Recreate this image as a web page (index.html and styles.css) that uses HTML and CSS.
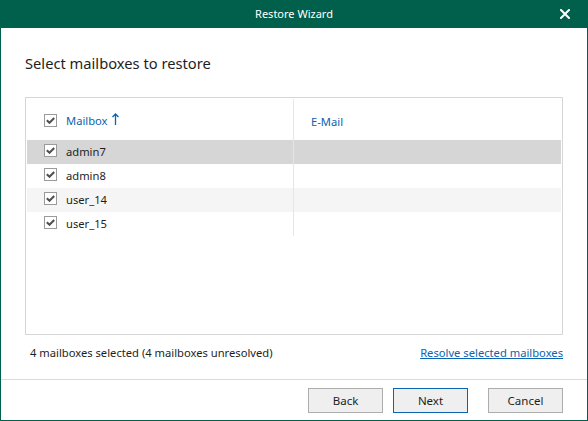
FILE: index.html
```html
<!DOCTYPE html>
<html>
<head>
<meta charset="utf-8">
<link rel="stylesheet" href="styles.css">
</head>
<body>
<div class="window">
  <div class="titlebar">
    <span></span>
    <span class="title">Restore Wizard</span>
    <span class="close-wrap">
      <svg class="close" width="10" height="10" viewBox="0 0 10 10"><path d="M1 1L9 9M9 1L1 9" stroke="#fff" stroke-width="2" stroke-linecap="square"/></svg>
    </span>
  </div>
  <div class="body">
    <div class="main">
      <h1 class="heading">Select mailboxes to restore</h1>
      <div class="grid">
        <div class="row header">
          <div class="cell first">
            <span class="cb"><svg width="9" height="7" viewBox="0 0 9 7"><path d="M0.8 3.2L3.5 5.8L8.2 1" fill="none" stroke="#505050" stroke-width="2"/></svg></span>
            <span class="col-title">Mailbox</span>
            <svg class="sort" width="7" height="12" viewBox="0 0 7 12"><path d="M3.5 1V12M0.5 4L3.5 1L6.5 4" fill="none" stroke="#0a64b0" stroke-width="1.3"/></svg>
          </div>
          <div class="cell second"><span class="col-title">E-Mail</span></div>
        </div>
        <div class="row selected">
          <div class="cell first"><span class="cb"><svg width="9" height="7" viewBox="0 0 9 7"><path d="M0.8 3.2L3.5 5.8L8.2 1" fill="none" stroke="#505050" stroke-width="2"/></svg></span><span>admin7</span></div>
          <div class="cell second"></div>
        </div>
        <div class="row">
          <div class="cell first"><span class="cb"><svg width="9" height="7" viewBox="0 0 9 7"><path d="M0.8 3.2L3.5 5.8L8.2 1" fill="none" stroke="#505050" stroke-width="2"/></svg></span><span>admin8</span></div>
          <div class="cell second"></div>
        </div>
        <div class="row alt">
          <div class="cell first"><span class="cb"><svg width="9" height="7" viewBox="0 0 9 7"><path d="M0.8 3.2L3.5 5.8L8.2 1" fill="none" stroke="#505050" stroke-width="2"/></svg></span><span>user_14</span></div>
          <div class="cell second"></div>
        </div>
        <div class="row">
          <div class="cell first"><span class="cb"><svg width="9" height="7" viewBox="0 0 9 7"><path d="M0.8 3.2L3.5 5.8L8.2 1" fill="none" stroke="#505050" stroke-width="2"/></svg></span><span>user_15</span></div>
          <div class="cell second"></div>
        </div>
      </div>
      <div class="status">
        <span>4 mailboxes selected (4 mailboxes unresolved)</span>
        <a class="link" href="#">Resolve selected mailboxes</a>
      </div>
    </div>
    <div class="footer">
      <button class="btn">Back</button>
      <button class="btn primary">Next</button>
      <button class="btn cancel">Cancel</button>
    </div>
  </div>
</div>
</body>
</html>
```
FILE: styles.css
```css
html, body {
  margin: 0;
  padding: 0;
  background: #fff;
}
body {
  font-family: "Noto Sans", "Open Sans", sans-serif;
  font-size: 11.2px;
  color: #1e1e1e;
}
.window {
  width: 588px;
  height: 421px;
  display: flex;
  flex-direction: column;
}
.titlebar {
  height: 28px;
  background: #00604b;
  color: #fff;
  display: grid;
  grid-template-columns: 1fr auto 1fr;
  align-items: center;
  flex: none;
}
.title {
  font-size: 11px;
  line-height: 16px;
}
.close-wrap {
  display: flex;
  justify-content: flex-end;
  padding-right: 18px;
}
.close {
  display: block;
}
.body {
  flex: 1;
  display: flex;
  flex-direction: column;
  border: 1px solid #00604b;
  border-top: none;
}
.main {
  flex: 1;
  padding: 0 24px;
}
.heading {
  margin: 25px 0 24px 0;
  font-size: 14.7px;
  font-weight: normal;
  line-height: 20px;
  color: #1e1e1e;
}
.grid {
  height: 238px;
  box-sizing: border-box;
  border: 1px solid #d6d6d6;
  padding: 0 1px;
}
.row {
  display: flex;
  height: 24px;
}
.row.header {
  height: 42px;
  align-items: stretch;
}
.cell {
  display: flex;
  align-items: center;
  box-sizing: border-box;
}
.row .cell.first {
  padding-bottom: 1px;
}
.cell.first {
  width: 266px;
  padding-left: 17px;
}
.cell.second {
  flex: 1;
  border-left: 1px solid #e6e6e6;
  padding-left: 17px;
}
.header .cell {
  padding-top: 3px;
}
.header .cell.second {
  margin-top: 1px;
}
.row.selected {
  background: #d6d6d6;
}
.row.alt {
  background: #f5f5f5;
}
.cb {
  width: 13px;
  height: 13px;
  box-sizing: border-box;
  border: 1px solid #9a9a9a;
  background: #fff;
  display: flex;
  align-items: center;
  justify-content: center;
  margin-right: 9px;
  flex: none;
}
.row:not(.header) .cb {
  margin-bottom: 2px;
}
.cb svg {
  display: block;
}
.col-title {
  color: #0a64b0;
}
.sort {
  margin-left: 4px;
  margin-top: -3px;
}
.status {
  display: flex;
  justify-content: space-between;
  align-items: center;
  margin-top: 9px;
  height: 16px;
  padding-left: 5px;
}
.link {
  color: #0a64b0;
  text-decoration: underline;
}
.footer {
  height: 41px;
  box-sizing: border-box;
  border-top: 1px solid #dadada;
  display: flex;
  justify-content: flex-end;
  align-items: flex-start;
  padding: 8px 24px 0 0;
  flex: none;
}
.btn {
  width: 75px;
  height: 25px;
  box-sizing: border-box;
  border: 1px solid #adadad;
  background: #efefef;
  font-family: inherit;
  font-size: 11.5px;
  color: #1e1e1e;
  padding: 0;
  margin-left: 10px;
}
.btn.primary {
  border-color: #0a64b0;
}
.btn.cancel {
  margin-left: 20px;
}
```
